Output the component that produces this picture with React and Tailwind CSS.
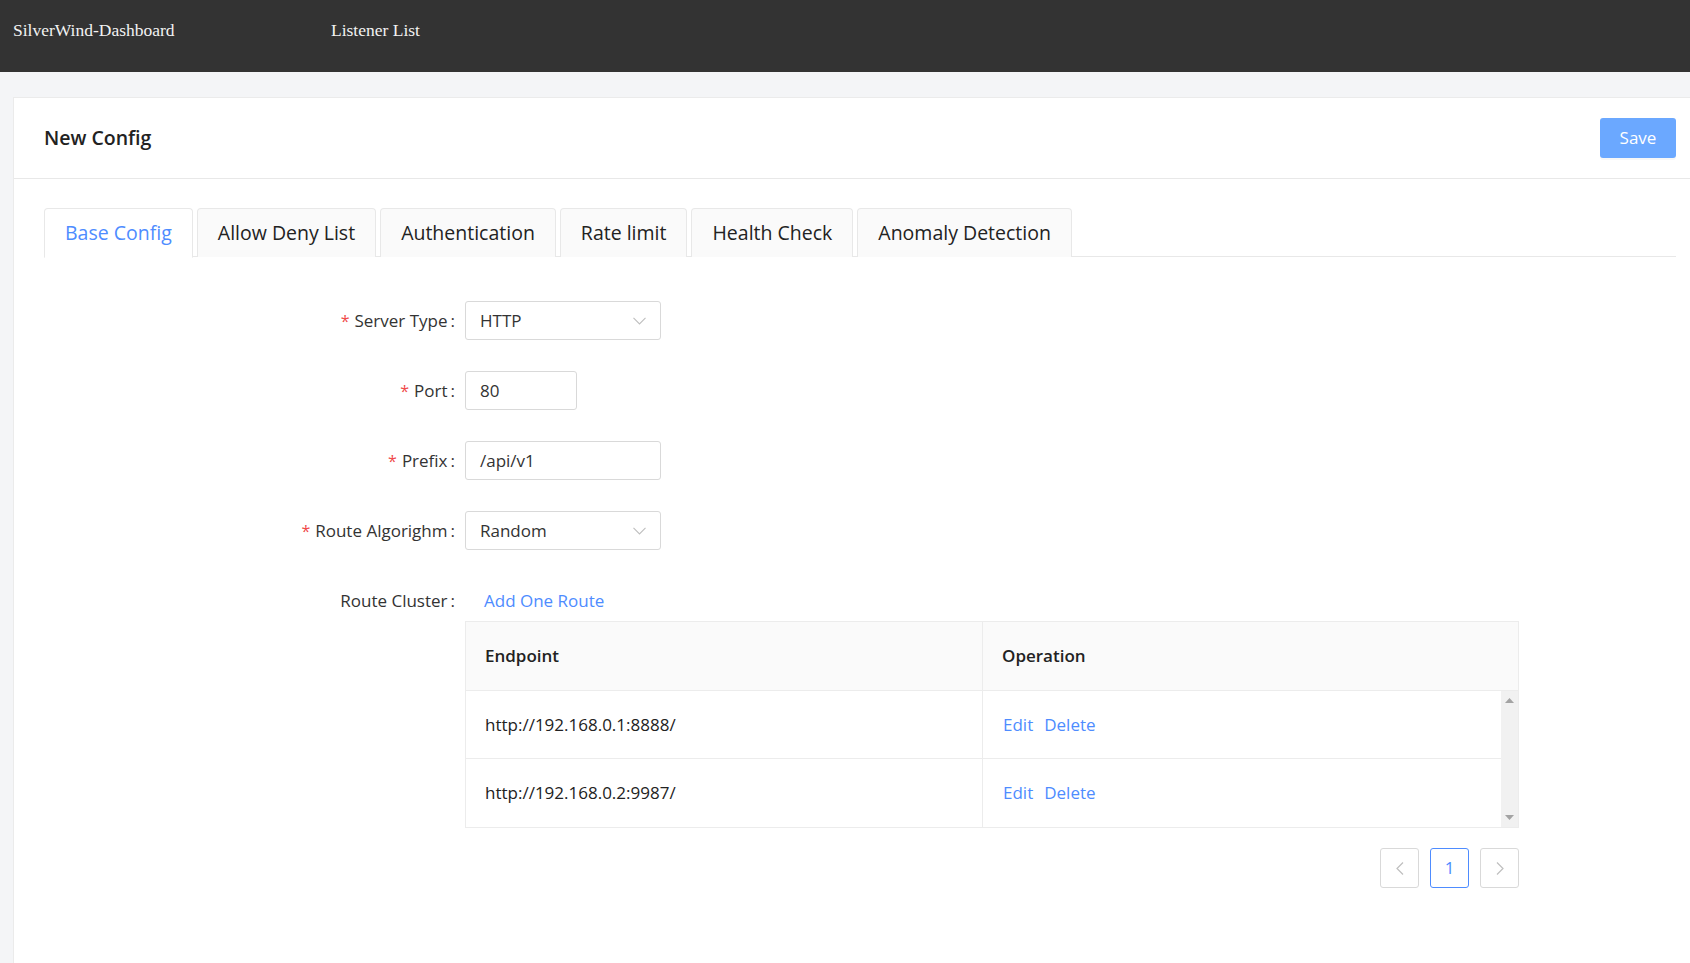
import React from "react";

const font = { fontFamily: '"Open Sans", "Noto Sans", sans-serif' };

function Chevron() {
  return (
    <svg width="13" height="8" viewBox="0 0 13 8" className="shrink-0">
      <path d="M0.5 0.8 L6.5 7 L12.5 0.8" fill="none" stroke="#bfbfbf" strokeWidth="1.1" />
    </svg>
  );
}

function Label({ text, required = true }) {
  return (
    <div className="w-[421px] shrink-0 flex justify-end items-center pr-[10px] text-[17px] text-[#333]">
      {required && <span className="text-[#f04a4a] mr-[5px] text-[16px]">*</span>}
      <span>{text}</span>
      <span className="ml-[3px]">:</span>
    </div>
  );
}

function Select({ value }) {
  return (
    <div className="w-[196px] h-[39px] border border-[#d9d9d9] rounded-[3px] flex items-center justify-between pl-[14px] pr-[14px] text-[17px] text-[#333] bg-white">
      <span>{value}</span>
      <Chevron />
    </div>
  );
}

function Input({ value, width }) {
  return (
    <div className={`${width} h-[39px] border border-[#d9d9d9] rounded-[3px] flex items-center pl-[14px] text-[17px] text-[#333] bg-white`}>
      {value}
    </div>
  );
}

const tabs = ["Base Config", "Allow Deny List", "Authentication", "Rate limit", "Health Check", "Anomaly Detection"];

export default function App() {
  return (
    <div className="min-h-screen bg-[#f4f5f7] flex flex-col" style={font}>
      <div className="h-[72px] bg-[#333333] flex items-center shrink-0 pb-[12px]" style={{ fontFamily: '"Liberation Serif", serif' }}>
        <span className="text-[#f2f2f2] text-[17.5px] ml-[13px] w-[318px]">SilverWind-Dashboard</span>
        <span className="text-[#f2f2f2] text-[17.5px]">Listener List</span>
      </div>
      <div className="flex-1 pt-[25px] pl-[13px] flex flex-col">
        <div className="flex-1 bg-white border-l border-t border-[#ebebeb] flex flex-col">
          <div className="h-[81px] border-b border-[#e8e8e8] flex items-center justify-between pl-[30px] pr-[14px]">
            <span className="text-[19.5px] font-semibold text-[#222]">New Config</span>
            <button className="w-[76px] h-[40px] rounded-[3px] bg-[#6ba8ff] text-white text-[17px] mt-[-1px] shadow-[0_2px_0_rgba(0,0,0,0.03)]">Save</button>
          </div>
          <div className="pt-[29px] pl-[30px] pr-[14px]">
            <div className="flex gap-[4px] border-b border-[#e8e8e8] h-[49px]">
              {tabs.map((t, i) => (
                <div
                  key={t}
                  className={
                    i === 0
                      ? "h-[50px] px-[20px] flex items-center border border-[#e8e8e8] border-b-white rounded-t-[4px] bg-white text-[#4e8cff] text-[19.5px]"
                      : "h-[49px] px-[20px] flex items-center border border-[#e8e8e8] border-b-0 rounded-t-[4px] bg-[#fafafa] text-[#222] text-[19.5px]"
                  }
                >
                  {t}
                </div>
              ))}
            </div>
            <div className="flex flex-col pt-[44px]">
              <div className="flex items-center h-[39px]">
                <Label text="Server Type" />
                <Select value="HTTP" />
              </div>
              <div className="flex items-center h-[39px] mt-[31px]">
                <Label text="Port" />
                <Input value="80" width="w-[112px]" />
              </div>
              <div className="flex items-center h-[39px] mt-[31px]">
                <Label text="Prefix" />
                <Input value="/api/v1" width="w-[196px]" />
              </div>
              <div className="flex items-center h-[39px] mt-[31px]">
                <Label text="Route Algorighm" />
                <Select value="Random" />
              </div>
              <div className="flex items-center h-[39px] mt-[31px]">
                <Label text="Route Cluster" required={false} />
                <span className="text-[17px] text-[#4e8cff] ml-[19px]">Add One Route</span>
              </div>
              <div className="flex mt-[1px]">
                <div className="w-[421px] shrink-0" />
                <div className="w-[1054px] flex flex-col">
                  <div className="border border-[#ececec] flex flex-col">
                    <div className="flex h-[69px] bg-[#fafafa] border-b border-[#ececec] text-[17px] font-semibold text-[#222]">
                      <div className="w-[517px] border-r border-[#ececec] flex items-center pl-[19px]">Endpoint</div>
                      <div className="flex-1 flex items-center pl-[19px]">Operation</div>
                    </div>
                    <div className="flex">
                      <div className="flex-1 flex flex-col">
                        {["http://192.168.0.1:8888/", "http://192.168.0.2:9987/"].map((u, i) => (
                          <div key={u} className={`flex h-[68px] text-[17px] text-[#222] ${i === 0 ? "border-b border-[#ececec]" : ""}`}>
                            <div className="w-[517px] border-r border-[#ececec] flex items-center pl-[19px]">{u}</div>
                            <div className="flex-1 flex items-center pl-[20px] gap-[11px] text-[#4e8cff]">
                              <span>Edit</span>
                              <span>Delete</span>
                            </div>
                          </div>
                        ))}
                      </div>
                      <div className="w-[17px] bg-[#f1f1f1] flex flex-col items-center justify-between py-[7px]">
                        <svg width="9" height="5" viewBox="0 0 9 5"><path d="M0 5 L4.5 0 L9 5 Z" fill="#a3a3a3" /></svg>
                        <svg width="9" height="5" viewBox="0 0 9 5"><path d="M0 0 L4.5 5 L9 0 Z" fill="#a3a3a3" /></svg>
                      </div>
                    </div>
                  </div>
                  <div className="flex justify-end gap-[11px] mt-[20px]">
                    <div className="w-[39px] h-[40px] border border-[#d9d9d9] rounded-[3px] flex items-center justify-center">
                      <svg width="8" height="13" viewBox="0 0 8 13"><path d="M7 0.5 L1 6.5 L7 12.5" fill="none" stroke="#bfbfbf" strokeWidth="1.2" /></svg>
                    </div>
                    <div className="w-[39px] h-[40px] border border-[#4e8cff] rounded-[3px] flex items-center justify-center text-[17px] text-[#4e8cff]">1</div>
                    <div className="w-[39px] h-[40px] border border-[#d9d9d9] rounded-[3px] flex items-center justify-center">
                      <svg width="8" height="13" viewBox="0 0 8 13"><path d="M1 0.5 L7 6.5 L1 12.5" fill="none" stroke="#bfbfbf" strokeWidth="1.2" /></svg>
                    </div>
                  </div>
                </div>
              </div>
            </div>
          </div>
        </div>
      </div>
    </div>
  );
}
